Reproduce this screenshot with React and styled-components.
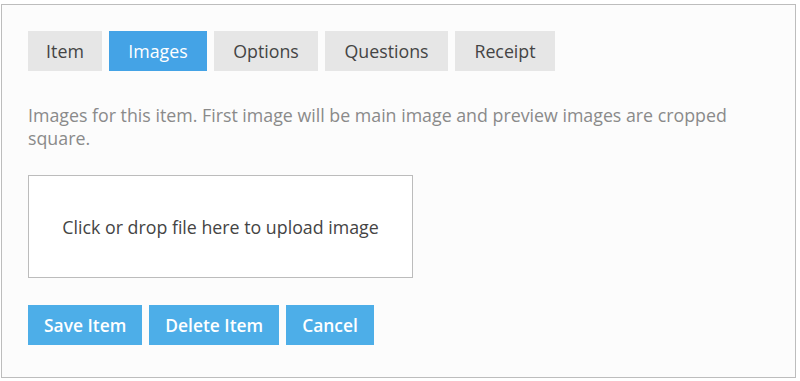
import React, { useState } from "react";
import styled, { createGlobalStyle } from "styled-components";

const GlobalStyle = createGlobalStyle`
    body {
        margin: 0;
        background: #ffffff;
        font-family: "Open Sans", "Liberation Sans", sans-serif;
    }
`;

const Panel = styled.div`
    box-sizing: border-box;
    margin: 4px 0 0 1px;
    width: 795px;
    height: 374px;
    padding: 26px 26px;
    border: 1px solid #bdbdbd;
    background: #fcfcfc;
    display: flex;
    flex-direction: column;
`;

const Tabs = styled.div`
    display: flex;
    gap: 7px;
`;

const Tab = styled.button`
    width: ${(p) => p.$width}px;
    height: 40px;
    padding: 0;
    border: none;
    background: ${(p) => (p.$active ? "#44a3e6" : "#e6e6e6")};
    color: ${(p) => (p.$active ? "#ffffff" : "#444444")};
    font-family: inherit;
    font-size: 17.8px;
    cursor: pointer;
`;

const Hint = styled.p`
    margin: 33px 0 0;
    padding-right: 40px;
    font-size: 17.8px;
    line-height: 23px;
    color: #8a8a8a;
`;

const DropZone = styled.div`
    box-sizing: border-box;
    margin-top: 25px;
    width: 385px;
    height: 103px;
    border: 1px solid #bcbcbc;
    background: #ffffff;
    display: flex;
    align-items: center;
    justify-content: center;
    font-size: 17.8px;
    color: #444444;
`;

const Actions = styled.div`
    display: flex;
    gap: 7px;
    margin-top: 27px;
`;

const ActionButton = styled.button`
    height: 40px;
    padding: 0 16px;
    border: none;
    background: #4daee8;
    color: #ffffff;
    font-family: inherit;
    font-size: 17.4px;
    font-weight: 600;
    cursor: pointer;
`;

const tabs = [
    { label: "Item", width: 74 },
    { label: "Images", width: 98 },
    { label: "Options", width: 104 },
    { label: "Questions", width: 123 },
    { label: "Receipt", width: 100 },
];

function App() {
    const [active, setActive] = useState("Images");

    return (
        <>
            <GlobalStyle />
            <Panel>
                <Tabs>
                    {tabs.map((t) => (
                        <Tab
                            key={t.label}
                            $width={t.width}
                            $active={active === t.label}
                            onClick={() => setActive(t.label)}
                        >
                            {t.label}
                        </Tab>
                    ))}
                </Tabs>
                <Hint>
                    Images for this item. First image will be main image and preview images are cropped square.
                </Hint>
                <DropZone>Click or drop file here to upload image</DropZone>
                <Actions>
                    <ActionButton>Save Item</ActionButton>
                    <ActionButton>Delete Item</ActionButton>
                    <ActionButton>Cancel</ActionButton>
                </Actions>
            </Panel>
        </>
    );
}

export default App;
